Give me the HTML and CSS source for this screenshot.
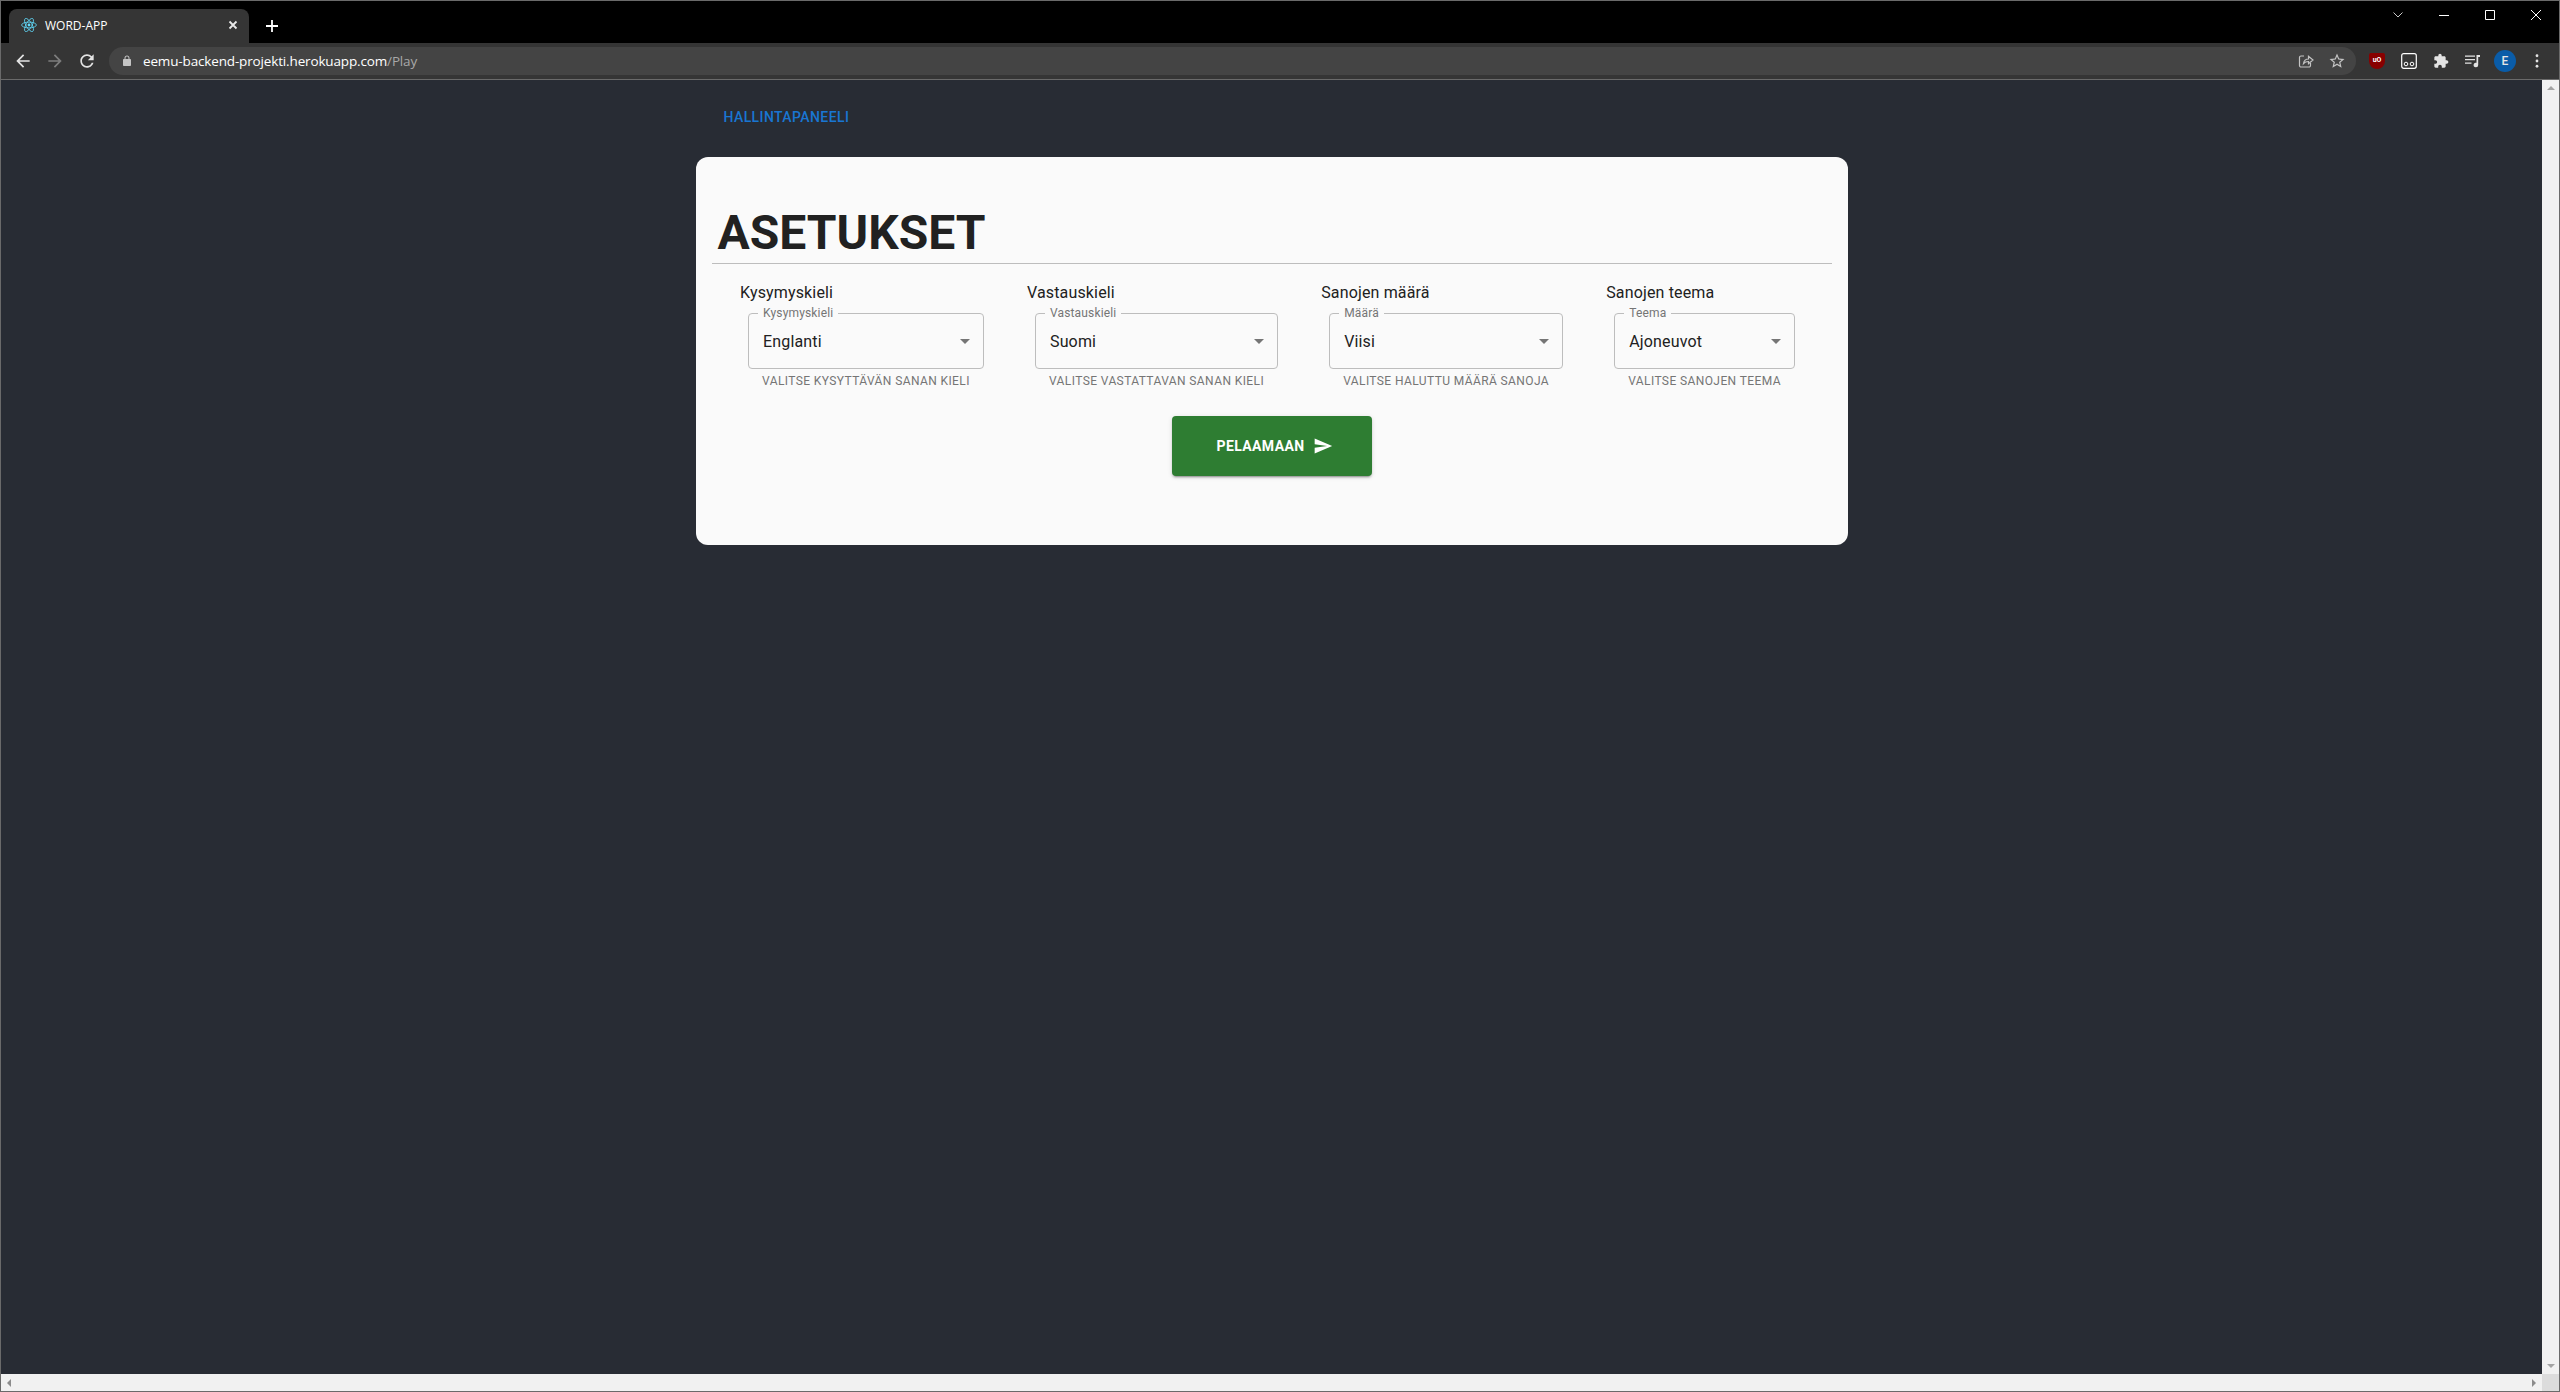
FILE: index.html
```html
<!DOCTYPE html>
<html lang="en">
<head>
  <meta charset="UTF-8">
  <title>WORD-APP</title>
  <link rel="stylesheet" href="styles.css">
</head>
<body>
  <div class="window">
    <!-- Tab strip -->
    <div class="tabstrip">
      <div class="tab">
        <svg class="favicon" viewBox="0 0 16 16" fill="none" stroke="#61dafb" stroke-width="0.8">
          <ellipse cx="8" cy="8" rx="7.4" ry="2.9"/>
          <ellipse cx="8" cy="8" rx="7.4" ry="2.9" transform="rotate(60 8 8)"/>
          <ellipse cx="8" cy="8" rx="7.4" ry="2.9" transform="rotate(120 8 8)"/>
          <circle cx="8" cy="8" r="1.4" fill="#61dafb" stroke="none"/>
        </svg>
        <span class="tab-title">WORD-APP</span>
        <svg class="tab-close" viewBox="0 0 10 10" stroke="#e8e8e8" stroke-width="1.8"><path d="M1.5 1.5l7 7M8.5 1.5l-7 7"/></svg>
      </div>
      <svg class="new-tab" viewBox="0 0 12 12" stroke="#fff" stroke-width="1.8"><path d="M6 0v12M0 6h12"/></svg>
      <div class="window-controls">
        <svg class="win-chevron" viewBox="0 0 10 6" fill="none" stroke="#c8c8c8"><path d="M.5.5L5 5 9.5.5"/></svg>
        <svg class="win-btn" viewBox="0 0 10 10" stroke="#fff"><path d="M0 5.5h10"/></svg>
        <svg class="win-btn" viewBox="0 0 10 10" fill="none" stroke="#fff"><path d="M.5.5h9v9h-9z"/></svg>
        <svg class="win-btn" viewBox="0 0 10 10" stroke="#fff"><path d="M0 0l10 10M10 0L0 10"/></svg>
      </div>
    </div>

    <!-- Toolbar -->
    <div class="toolbar">
      <svg class="nav-icon" viewBox="0 0 24 24" fill="#e3e3e3"><path d="M20 11H7.83l5.59-5.59L12 4l-8 8 8 8 1.41-1.41L7.83 13H20v-2z"/></svg>
      <svg class="nav-icon" viewBox="0 0 24 24" fill="#7d7d7d"><path d="M4 11h12.17l-5.59-5.59L12 4l8 8-8 8-1.41-1.41L16.17 13H4v-2z"/></svg>
      <svg class="nav-icon" viewBox="0 0 24 24" fill="#e3e3e3"><path d="M17.65 6.35C16.2 4.9 14.21 4 12 4c-4.42 0-7.99 3.58-7.99 8s3.57 8 7.99 8c3.73 0 6.84-2.55 7.73-6h-2.08c-.82 2.33-3.04 4-5.65 4-3.31 0-6-2.69-6-6s2.69-6 6-6c1.66 0 3.14.69 4.22 1.78L13 11h7V4l-2.35 2.35z"/></svg>
      <div class="omnibox">
        <svg class="lock" viewBox="0 0 24 24" fill="#c4c4c4"><path d="M18 8h-1V6c0-2.76-2.24-5-5-5S7 3.24 7 6v2H6c-1.1 0-2 .9-2 2v10c0 1.1.9 2 2 2h12c1.1 0 2-.9 2-2V10c0-1.1-.9-2-2-2zm-9-2c0-1.66 1.34-3 3-3s3 1.34 3 3v2H9V6z"/></svg>
        <span class="url">eemu-backend-projekti.herokuapp.com<span class="url-path">/Play</span></span>
        <svg class="omni-icon share" viewBox="0 0 16 16" fill="none" stroke="#c4c4c4" stroke-width="1.2"><path d="M6 3H3a1.5 1.5 0 0 0-1.5 1.500v8A1.500 1.500 0 0 0 3 14h8a1.500 1.500 0 0 0 1.500-1.500V10"/><path d="M5.500 10.500C6 7.500 8 6 10.500 6V3.200L15 7l-4.500 3.800V8.500c-2 0-3.700.5-5 2z"/></svg>
        <svg class="omni-icon star" viewBox="0 0 24 24" fill="#c4c4c4"><path d="M22 9.240l-7.190-.62L12 2 9.190 8.630 2 9.240l5.460 4.730L5.820 21 12 17.270 18.180 21l-1.630-7.030L22 9.240zM12 15.400l-3.760 2.270 1-4.280-3.320-2.880 4.380-.38L12 6.100l1.710 4.040 4.380.38-3.320 2.880 1 4.280L12 15.400z"/></svg>
      </div>
      <div class="extensions">
        <div class="ext ublock"><span>uO</span></div>
        <svg class="ext" viewBox="0 0 16 16" fill="none" stroke="#fff"><rect x=".7" y=".7" width="14.600" height="14.600" rx="2" stroke-width="1.200"/><circle cx="5" cy="11" r="1.800"/><circle cx="11" cy="11" r="1.800"/></svg>
        <svg class="ext" viewBox="0 0 24 24" fill="#e3e3e3"><path d="M20.500 11H19V7c0-1.100-.9-2-2-2h-4V3.500C13 2.120 11.880 1 10.500 1S8 2.120 8 3.500V5H4c-1.100 0-1.990.9-1.990 2v3.800H3.500c1.490 0 2.700 1.210 2.700 2.700s-1.210 2.700-2.700 2.700H2V20c0 1.100.9 2 2 2h3.800v-1.500c0-1.490 1.210-2.700 2.700-2.700 1.490 0 2.700 1.210 2.700 2.700V22H17c1.100 0 2-.9 2-2v-4h1.500c1.380 0 2.500-1.120 2.500-2.500S21.880 11 20.500 11z"/></svg>
        <svg class="ext" viewBox="0 0 16 16" fill="#e3e3e3"><path d="M0 2.500h10v1.200H0zM0 6h10v1.200H0zM0 9.500h6.500v1.200H0zM11.500 2H15v2h-1.800v8a2.300 2.300 0 1 1-1.700-2.200z"/></svg>
        <div class="avatar">E</div>
        <svg class="menu-dots" viewBox="0 0 4 16" fill="#e3e3e3"><circle cx="2" cy="2" r="1.600"/><circle cx="2" cy="8" r="1.600"/><circle cx="2" cy="14" r="1.600"/></svg>
      </div>
    </div>

    <!-- Page -->
    <div class="viewport">
      <main class="page">
        <div class="container">
          <a class="admin-link" href="#">Hallintapaneeli</a>
          <section class="card">
            <h1 class="card-title">ASETUKSET</h1>
            <div class="settings">
              <div class="setting">
                <div class="setting-label">Kysymyskieli</div>
                <fieldset class="select">
                  <legend>Kysymyskieli</legend>
                  <span>Englanti</span>
                  <i class="caret"></i>
                </fieldset>
                <p class="helper">Valitse kysyttävän sanan kieli</p>
              </div>
              <div class="setting">
                <div class="setting-label">Vastauskieli</div>
                <fieldset class="select">
                  <legend>Vastauskieli</legend>
                  <span>Suomi</span>
                  <i class="caret"></i>
                </fieldset>
                <p class="helper">Valitse vastattavan sanan kieli</p>
              </div>
              <div class="setting">
                <div class="setting-label">Sanojen määrä</div>
                <fieldset class="select">
                  <legend>Määrä</legend>
                  <span>Viisi</span>
                  <i class="caret"></i>
                </fieldset>
                <p class="helper">Valitse haluttu määrä sanoja</p>
              </div>
              <div class="setting">
                <div class="setting-label">Sanojen teema</div>
                <fieldset class="select">
                  <legend>Teema</legend>
                  <span>Ajoneuvot</span>
                  <i class="caret"></i>
                </fieldset>
                <p class="helper">Valitse sanojen teema</p>
              </div>
            </div>
            <button class="play-btn">
              Pelaamaan
              <svg viewBox="0 0 24 24" fill="#fff"><path d="M2.010 21L23 12 2.010 3 2 10l15 2-15 2z"/></svg>
            </button>
          </section>
        </div>
      </main>
      <div class="vscroll">
        <i class="arrow arrow-up"></i>
        <i class="arrow arrow-down"></i>
      </div>
    </div>
    <div class="hscroll">
      <i class="arrow arrow-left"></i>
      <i class="arrow arrow-right"></i>
      <div class="corner"></div>
    </div>
  </div>
</body>
</html>
```

FILE: styles.css
```css
/* General Styles */
html,
body {
  height: 100%;
  margin: 0;
  overflow: hidden;
}

body {
  font-family: 'Roboto', sans-serif;
  background: #000;
}

.window {
  height: 100vh;
  box-sizing: border-box;
  border: 1px solid #6a6a6a;
  display: flex;
  flex-direction: column;
}

/* Tab strip */
.tabstrip {
  height: 42px;
  flex: none;
  background: #000;
  display: flex;
  align-items: flex-end;
  padding-left: 8px;
}

.tab {
  width: 240px;
  height: 34px;
  box-sizing: border-box;
  background: #353535;
  border-radius: 8px 8px 0 0;
  display: flex;
  align-items: center;
  padding: 0 11px 2px 12px;
  color: #fff;
  font-family: 'Open Sans', sans-serif;
  font-size: 12px;
}

.favicon {
  width: 16px;
  height: 16px;
  margin-right: 8px;
}

.tab-title {
  flex: 1;
}

.tab-close {
  width: 10px;
  height: 10px;
}

.new-tab {
  width: 12px;
  height: 12px;
  margin: 0 0 11px 17px;
}

.window-controls {
  margin-left: auto;
  align-self: flex-start;
  display: flex;
  align-items: center;
  height: 28px;
  padding-right: 18px;
}

.win-chevron {
  width: 10px;
  height: 6px;
  margin-right: 36px;
}

.win-btn {
  width: 10px;
  height: 10px;
  margin-left: 36px;
}

.win-chevron + .win-btn {
  margin-left: 0;
}

/* Toolbar */
.toolbar {
  height: 37px;
  flex: none;
  box-sizing: border-box;
  background: #353535;
  border-bottom: 1px solid #6a6a6a;
  display: flex;
  align-items: center;
  padding: 0 13px 1px 12px;
}

.nav-icon {
  width: 20px;
  height: 20px;
  margin-right: 12px;
}

.omnibox {
  width: 2247px;
  height: 28px;
  background: #444;
  border-radius: 14px;
  display: flex;
  align-items: center;
  padding: 0 10px 0 12px;
  box-sizing: border-box;
}

.lock {
  width: 12px;
  height: 12px;
  margin-right: 10px;
}

.url {
  flex: 1;
  color: #fff;
  font-family: 'Open Sans', sans-serif;
  font-size: 13.5px;
  letter-spacing: -0.15px;
}

.url-path {
  color: #a8a8a8;
}

.omni-icon {
  width: 16px;
  height: 16px;
  margin-left: 16px;
}

.omni-icon.star {
  width: 18px;
  height: 18px;
  margin-left: 14px;
}

.extensions {
  display: flex;
  align-items: center;
  margin-left: 13px;
}

.ext {
  width: 16px;
  height: 16px;
  margin-right: 16px;
}

.ublock {
  background: #800;
  border-radius: 2px 2px 8px 8px;
  color: #fff;
  font-size: 7px;
  font-weight: 700;
  line-height: 14px;
  text-align: center;
}

.avatar {
  width: 22px;
  height: 22px;
  border-radius: 50%;
  background: #0a5ca8;
  color: #e6e6e6;
  font-size: 12px;
  font-weight: 500;
  line-height: 22px;
  text-align: center;
  margin: 0 19px 0 -3px;
}

.menu-dots {
  width: 4px;
  height: 14px;
}

/* Page */
.viewport {
  flex: 1;
  min-height: 0;
  display: flex;
}

.page {
  flex: 1;
  min-width: 0;
  background: #282c34;
}

.container {
  width: 1152px;
  margin: 0 auto;
  padding-top: 25px;
}

.admin-link {
  display: block;
  margin-left: 28px;
  color: #1976d2;
  font-size: 14px;
  font-weight: 500;
  line-height: 24px;
  letter-spacing: 0.4px;
  text-transform: uppercase;
  text-decoration: none;
}

.card {
  margin-top: 28px;
  background: #fafafa;
  border-radius: 12px;
  padding: 48px 16px 69px;
  text-align: center;
}

.card-title {
  margin: 0;
  padding: 0 0 2px 6px;
  color: #212121;
  font-size: 48px;
  font-weight: 700;
  line-height: 56px;
  text-align: left;
  border-bottom: 1px solid #bdbdbd;
}

.settings {
  display: flex;
  justify-content: space-around;
  padding: 17px 11px 0;
  text-align: left;
}

.setting-label {
  color: #212121;
  font-size: 16px;
  line-height: 24px;
  letter-spacing: 0.15px;
}

.select {
  height: 62px;
  box-sizing: border-box;
  margin: 2px 8px 0;
  padding: 0 14px 5px;
  border: 1px solid #bdbdbd;
  border-radius: 4px;
  display: flex;
  align-items: center;
  justify-content: space-between;
  color: #212121;
  font-size: 16px;
  letter-spacing: 0.15px;
}

.select legend {
  margin-left: -5px;
  padding: 0 5px;
  color: #757575;
  font-size: 12px;
  line-height: 1;
}

.caret {
  width: 0;
  height: 0;
  margin-right: -1px;
  border-left: 5px solid transparent;
  border-right: 5px solid transparent;
  border-top: 5px solid #757575;
}

.helper {
  margin: 2px 22px 0;
  color: #757575;
  font-size: 12px;
  line-height: 20px;
  letter-spacing: 0.4px;
  text-transform: uppercase;
  white-space: nowrap;
}

.play-btn {
  width: 200px;
  height: 60px;
  margin-top: 25px;
  padding: 0 0 0 6px;
  border: none;
  border-radius: 4px;
  background: #2e7d32;
  color: #fff;
  font-family: 'Roboto', sans-serif;
  font-size: 14px;
  font-weight: 700;
  letter-spacing: 0.4px;
  text-transform: uppercase;
  display: inline-flex;
  align-items: center;
  justify-content: center;
  box-shadow: 0 3px 1px -2px rgba(0, 0, 0, 0.2), 0 2px 2px rgba(0, 0, 0, 0.14), 0 1px 5px rgba(0, 0, 0, 0.12);
}

.play-btn svg {
  width: 20px;
  height: 20px;
  margin-left: 8px;
}

/* Scrollbars */
.vscroll {
  width: 17px;
  flex: none;
  background: #f1f1f1;
  display: flex;
  flex-direction: column;
  justify-content: space-between;
  align-items: center;
  padding: 6px 0;
  box-sizing: border-box;
}

.hscroll {
  height: 17px;
  flex: none;
  background: #f1f1f1;
  display: flex;
  align-items: center;
  padding-left: 6px;
}

.arrow {
  width: 0;
  height: 0;
  border: 4px solid transparent;
}

.arrow-up {
  border-top: 0;
  border-bottom: 4px solid #a3a3a3;
}

.arrow-down {
  border-bottom: 0;
  border-top: 4px solid #a3a3a3;
}

.arrow-left {
  border-left: 0;
  border-right: 4px solid #8c8c8c;
}

.arrow-right {
  border-right: 0;
  border-left: 4px solid #8c8c8c;
  margin-left: auto;
  margin-right: 6px;
}

.corner {
  width: 17px;
  height: 17px;
  background: #dcdcdc;
}
```
